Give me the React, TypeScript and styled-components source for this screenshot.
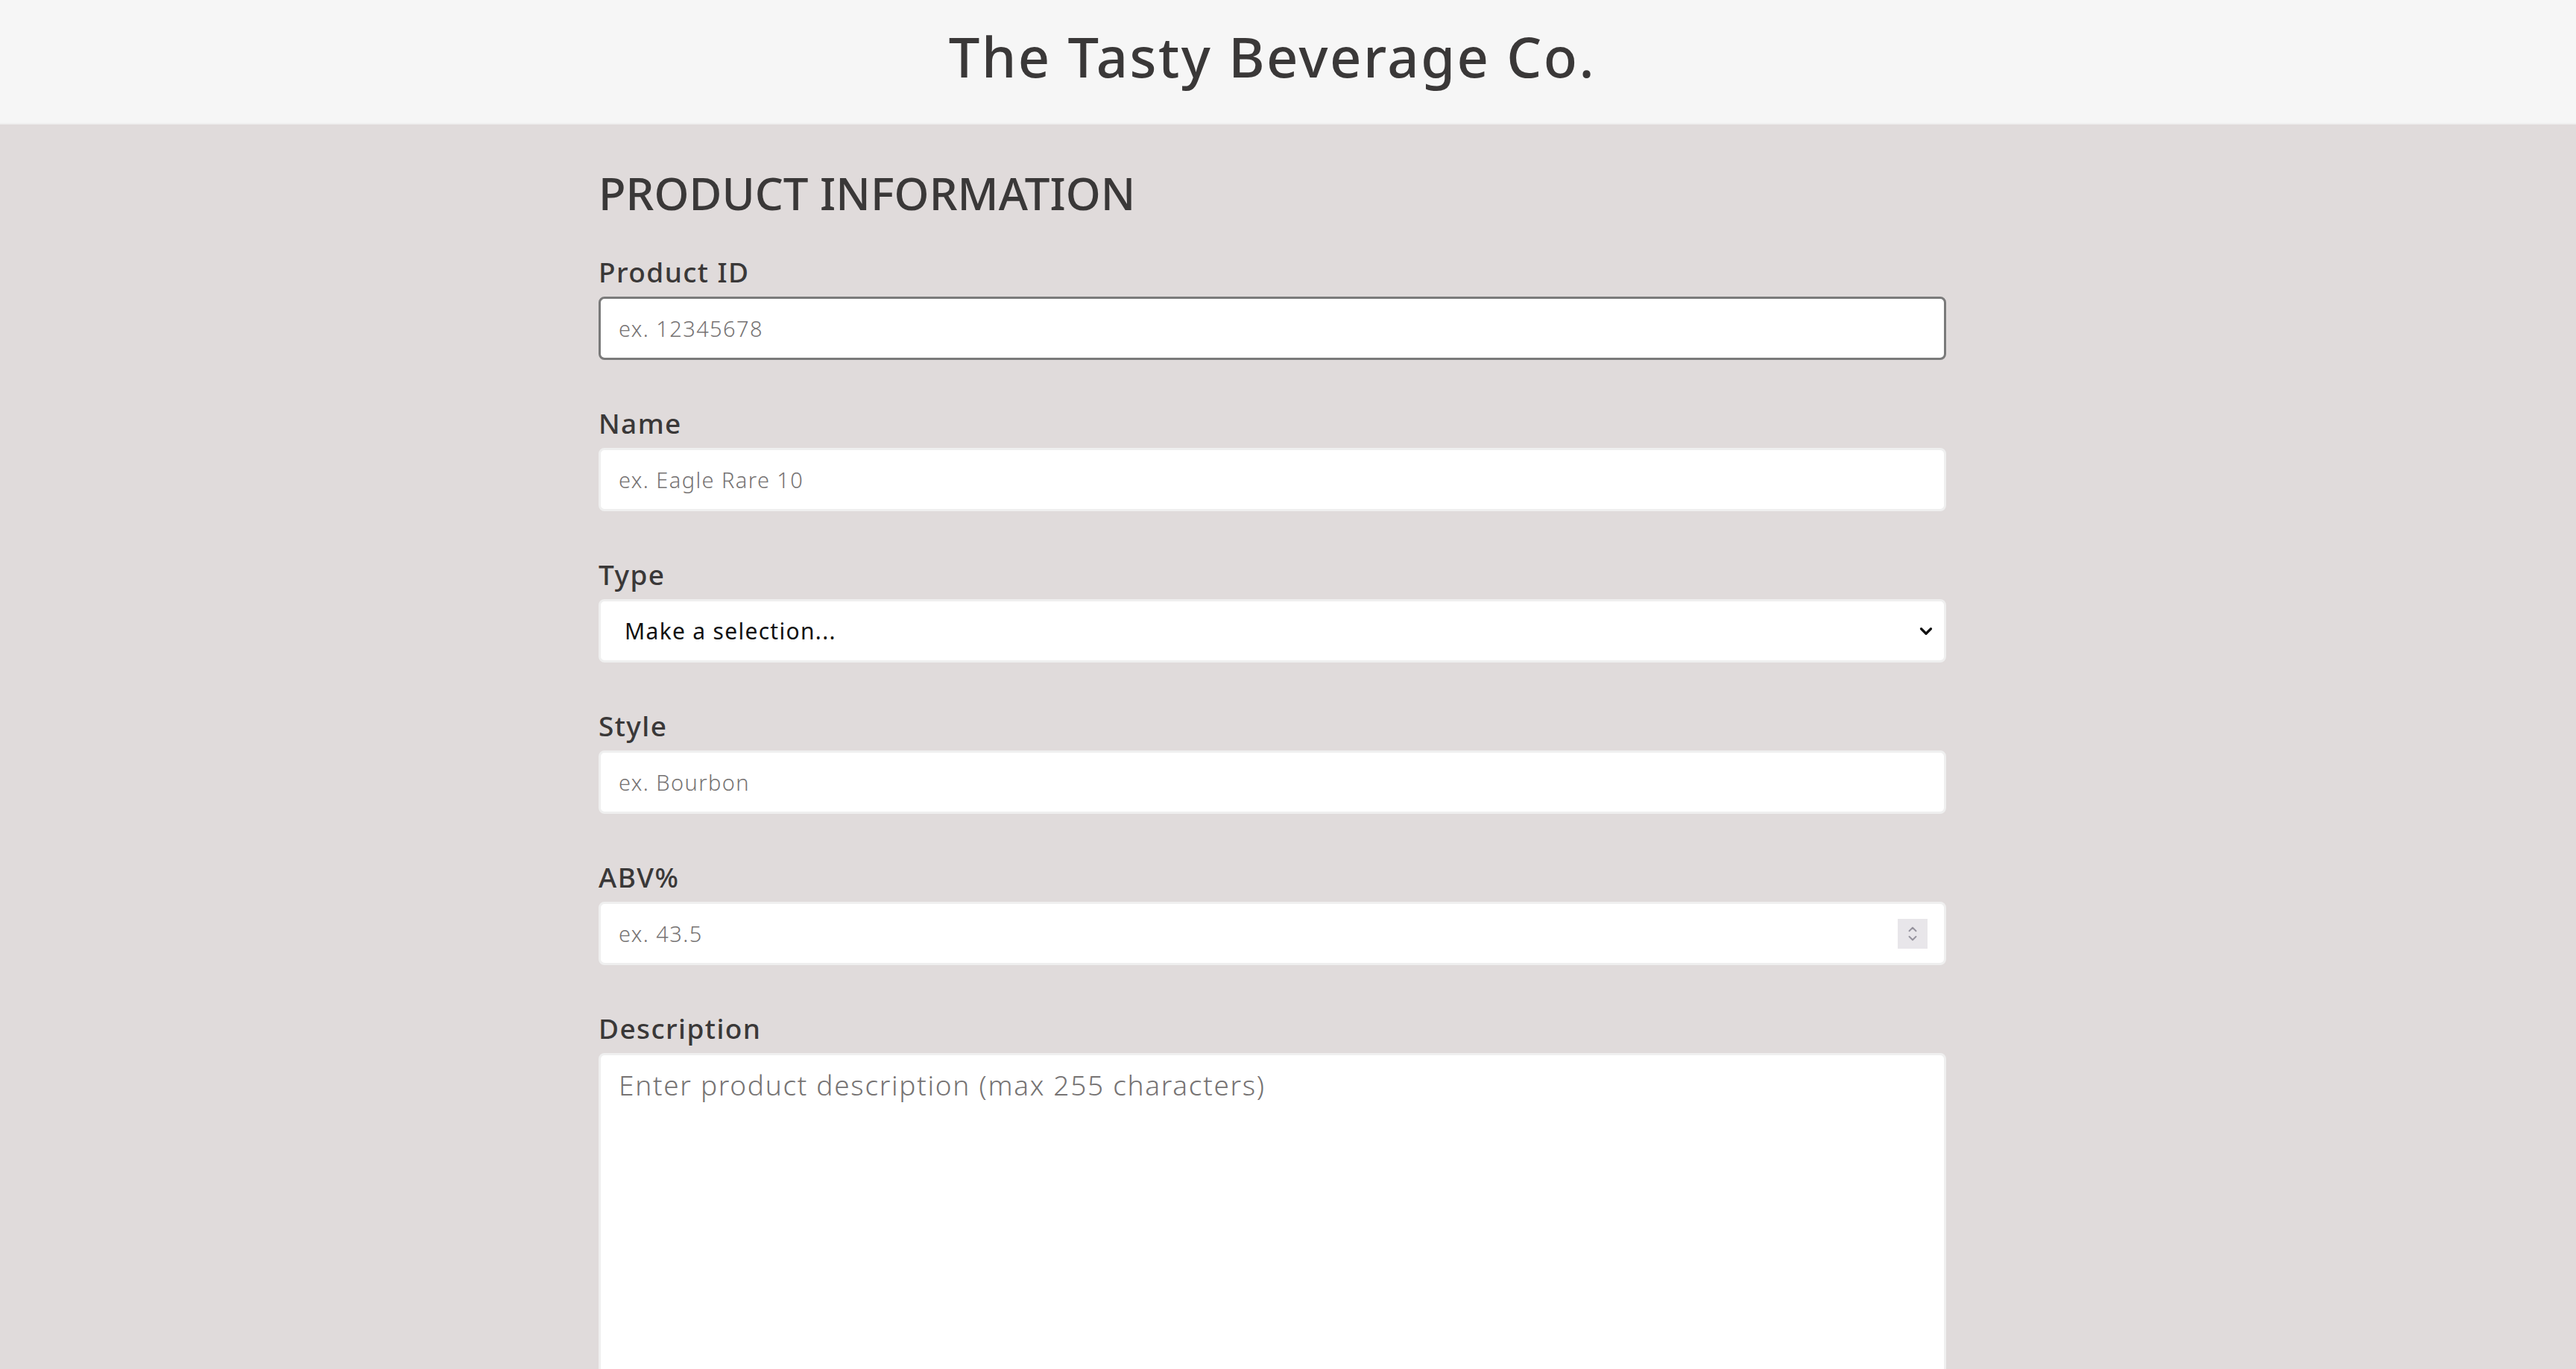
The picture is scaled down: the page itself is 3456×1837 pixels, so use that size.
import React from 'react';
import styled, { createGlobalStyle } from 'styled-components';
import { ChevronDown, ChevronUp } from 'lucide-react';

const GlobalStyle = createGlobalStyle`
  html, body {
    margin: 0;
    padding: 0;
    background-color: #e0dbdb;
    font-family: "Noto Sans", "Open Sans", sans-serif;
    color: #3a3737;
  }
  * {
    box-sizing: border-box;
  }
`;

const HeaderWrapper = styled.header`
  height: 167px;
  background-color: #f6f6f6;
  border-bottom: 2px solid #efefef;
  display: flex;
  align-items: center;
  justify-content: center;
  padding: 0 42px 12px 0;
`;

const Title = styled.h1`
  margin: 0;
  font-size: 74px;
  font-weight: 500;
  line-height: 1.2;
  color: #3a3838;
  letter-spacing: 2.5px;
`;

const Main = styled.main`
  display: flex;
  justify-content: center;
  padding: 56px 42px 0 0;
`;

const Form = styled.form`
  width: 1808px;
  display: flex;
  flex-direction: column;
`;

const Heading = styled.h2`
  margin: 0 0 48px;
  font-size: 60px;
  line-height: 72px;
  font-weight: 500;
  color: #3a3838;
`;

const Field = styled.div`
  display: flex;
  flex-direction: column;
  gap: 12px;
  margin-bottom: 63px;
`;

const Label = styled.label`
  font-size: 37px;
  line-height: 43px;
  font-weight: 500;
  color: #3a3838;
  letter-spacing: 1.4px;
`;

const Input = styled.input<{ $active?: boolean }>`
  height: 85px;
  width: 100%;
  padding: 0 24px;
  border: 3px solid ${(p) => (p.$active ? '#7a7a7a' : '#efefef')};
  border-radius: 8px;
  background: #ffffff;
  font-family: inherit;
  font-size: 29px;
  letter-spacing: 1.4px;
  color: #222;
  outline: none;

  &::placeholder {
    color: #767373;
    font-weight: 300;
  }

  &::-webkit-inner-spin-button,
  &::-webkit-outer-spin-button {
    -webkit-appearance: none;
    margin: 0;
  }
`;

const Control = styled.div`
  position: relative;
`;

const Select = styled.select`
  height: 85px;
  width: 100%;
  padding: 0 32px;
  border: 3px solid #efefef;
  border-radius: 8px;
  background: #ffffff;
  font-family: inherit;
  font-size: 30px;
  letter-spacing: 1.3px;
  color: #111;
  appearance: none;
  outline: none;
`;

const SelectArrow = styled.span`
  position: absolute;
  right: 14px;
  top: 50%;
  transform: translateY(-50%);
  display: flex;
  color: #111;
  pointer-events: none;
`;

const Spinner = styled.span`
  position: absolute;
  right: 25px;
  top: 50%;
  transform: translateY(-50%);
  width: 40px;
  height: 40px;
  background: #e8e6ea;
  display: flex;
  flex-direction: column;
  align-items: center;
  justify-content: center;
  color: #96939e;
  pointer-events: none;

  svg {
    margin: -3px 0;
  }
`;

const TextArea = styled.textarea`
  width: 100%;
  height: 520px;
  padding: 14px 24px;
  border: 3px solid #efefef;
  border-radius: 8px;
  background: #ffffff;
  font-family: inherit;
  font-size: 37px;
  letter-spacing: 1.7px;
  color: #222;
  resize: none;
  outline: none;

  &::placeholder {
    color: #767373;
    font-weight: 300;
  }
`;

const App: React.FC = () => {
  return (
    <>
      <GlobalStyle />
      <HeaderWrapper>
        <Title>The Tasty Beverage Co.</Title>
      </HeaderWrapper>
      <Main>
        <Form>
          <Heading>PRODUCT INFORMATION</Heading>
          <Field>
            <Label htmlFor="pid">Product ID</Label>
            <Input id="pid" $active placeholder="ex. 12345678" />
          </Field>
          <Field>
            <Label htmlFor="name">Name</Label>
            <Input id="name" placeholder="ex. Eagle Rare 10" />
          </Field>
          <Field>
            <Label htmlFor="type">Type</Label>
            <Control>
              <Select id="type" defaultValue="">
                <option value="">Make a selection...</option>
                <option value="spirit">Spirit</option>
                <option value="wine">Wine</option>
                <option value="beer">Beer</option>
              </Select>
              <SelectArrow>
                <ChevronDown size={26} strokeWidth={3} />
              </SelectArrow>
            </Control>
          </Field>
          <Field>
            <Label htmlFor="style">Style</Label>
            <Input id="style" placeholder="ex. Bourbon" />
          </Field>
          <Field>
            <Label htmlFor="abv">ABV%</Label>
            <Control>
              <Input id="abv" type="number" placeholder="ex. 43.5" />
              <Spinner>
                <ChevronUp size={18} strokeWidth={2.5} />
                <ChevronDown size={18} strokeWidth={2.5} />
              </Spinner>
            </Control>
          </Field>
          <Field>
            <Label htmlFor="desc">Description</Label>
            <TextArea id="desc" placeholder="Enter product description (max 255 characters)" />
          </Field>
        </Form>
      </Main>
    </>
  );
};

export default App;
